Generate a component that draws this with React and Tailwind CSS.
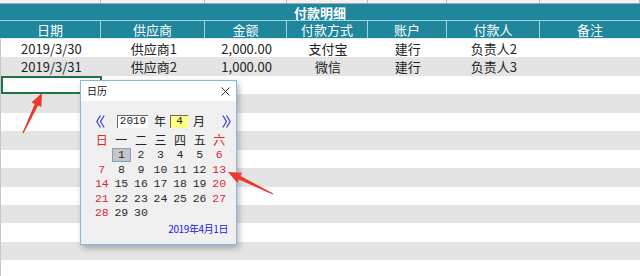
import React from "react";

const colW = ["w-[101px]", "w-[104px]", "w-[82px]", "w-[81px]", "w-[79px]", "w-[93px]", "w-[100px]"];
const headers = ["日期", "供应商", "金额", "付款方式", "账户", "付款人", "备注"];
const data = [
  ["2019/3/30", "供应商1", "2,000.00", "支付宝", "建行", "负责人2", ""],
  ["2019/3/31", "供应商2", "1,000.00", "微信", "建行", "负责人3", ""],
];

function Arrow({ x1, y1, x2, y2 }) {
  const dx = x2 - x1, dy = y2 - y1;
  const L = Math.hypot(dx, dy);
  const ux = dx / L, uy = dy / L;
  const nx = -uy, ny = ux;
  const hl = 13, hw = 5.5, sw0 = 0.6, sw1 = 1.9;
  const bx = x2 - ux * hl, by = y2 - uy * hl;
  const p = [
    [x1 + nx * sw0, y1 + ny * sw0],
    [bx + nx * sw1, by + ny * sw1],
    [bx + nx * hw, by + ny * hw],
    [x2, y2],
    [bx - nx * hw, by - ny * hw],
    [bx - nx * sw1, by - ny * sw1],
    [x1 - nx * sw0, y1 - ny * sw0],
  ];
  return <polygon points={p.map((q) => q.join(",")).join(" ")} fill="#ea3a2e" />;
}

const weekdays = ["日", "一", "二", "三", "四", "五", "六"];

function Chevrons({ dir }) {
  return (
    <svg width="9" height="13" viewBox="0 0 9 13" className="block">
      {dir === "l" ? (
        <g fill="none" stroke="#3c3cd0" strokeWidth="1.2">
          <polyline points="4.5,0.5 0.8,6.5 4.5,12.5" />
          <polyline points="8.2,0.5 4.5,6.5 8.2,12.5" />
        </g>
      ) : (
        <g fill="none" stroke="#3c3cd0" strokeWidth="1.2">
          <polyline points="0.8,0.5 4.5,6.5 0.8,12.5" />
          <polyline points="4.5,0.5 8.2,6.5 4.5,12.5" />
        </g>
      )}
    </svg>
  );
}

const cjk = { fontFamily: '"Noto Sans CJK SC", sans-serif' };
const mono = { fontFamily: '"Liberation Mono", monospace' };

function Calendar() {
  const cells = [null];
  for (let d = 1; d <= 30; d++) cells.push(d);
  return (
    <div className="absolute left-[80px] top-[80px] w-[157px] h-[165px] border border-[#86b6e4] bg-[#f0f0f0] shadow-[2px_3px_6px_rgba(0,0,0,0.28)]">
      <div className="h-[20px] bg-white flex items-center justify-between pl-[6px] pr-[6px]">
        <span className="text-[10px] leading-none text-[#111]" style={cjk}>日历</span>
        <svg width="9" height="9" viewBox="0 0 9 9" className="block">
          <path d="M0.5 0.5 L8.5 8.5 M8.5 0.5 L0.5 8.5" stroke="#333" strokeWidth="1" />
        </svg>
      </div>
      <div className="pt-[14px]">
        <div className="flex items-center h-[12px] pl-[15px]">
          <Chevrons dir="l" />
          <div className="ml-[12px] w-[31px] h-[13px] border-t border-l border-[#666] border-b-[#e0e0e0] border-r-[#e0e0e0] bg-white flex items-center justify-center text-[11px] leading-none text-[#222]" style={mono}>2019</div>
          <span className="ml-[6px] text-[12px] leading-none text-[#222]" style={cjk}>年</span>
          <div className="ml-[4px] w-[18px] h-[13px] border-t border-l border-[#666] border-b-[#e0e0e0] border-r-[#e0e0e0] bg-[#ffff80] flex items-center justify-center text-[11px] leading-none text-[#222]" style={mono}>4</div>
          <span className="ml-[5px] text-[12px] leading-none text-[#222]" style={cjk}>月</span>
          <div className="ml-[17px]"><Chevrons dir="r" /></div>
        </div>
        <div className="ml-[11px] mt-[6px] w-[137px] grid grid-cols-7">
          {weekdays.map((w, i) => (
            <div key={w} className={"h-[14.5px] flex items-center justify-center text-[12px] leading-none " + (i === 0 || i === 6 ? "text-[#e02828]" : "text-[#222]")} style={cjk}>{w}</div>
          ))}
          {cells.map((d, i) => {
            const col = i % 7;
            const red = col === 0 || col === 6;
            const sel = d === 1;
            return (
              <div key={i} className={"h-[14.5px] flex items-center justify-center text-[11.5px] leading-none " + (red ? "text-[#d8283c] " : "text-[#2a2a2a] ") + (sel ? "bg-[#c6c6c6] border border-[#7ea2c6]" : "")} style={mono}>
                {d ?? ""}
              </div>
            );
          })}
        </div>
        <div className="mt-[4px] pr-[8px] flex justify-end">
          <span className="text-[10px] leading-none text-[#2222d8] tracking-[-0.4px]" style={cjk}>2019年4月1日</span>
        </div>
      </div>
    </div>
  );
}

export default function App() {
  const rows = [];
  for (let r = 0; r < 13; r++) rows.push(data[r] || ["", "", "", "", "", "", ""]);
  return (
    <div className="relative w-[640px] h-[276px] overflow-hidden bg-white text-[#222]" style={{ fontFamily: '"Noto Sans CJK SC", "Noto Sans", sans-serif' }}>
      <div className="h-[4px] bg-[#f2f2f2] border-b border-[#a8a8a8] flex">
        {colW.map((w, i) => (
          <div key={i} className={w + " border-r border-[#b4b4b4]"} />
        ))}
      </div>
      <div className="h-[16px] bg-[#1f869c] flex items-center justify-center text-white font-bold text-[13px] leading-none">付款明细</div>
      <div className="h-px bg-[#9fd3df]" />
      <div className="h-[17px] bg-[#1f869c] flex">
        {headers.map((h, i) => (
          <div key={i} className={colW[i] + " flex items-center justify-center text-white text-[13px] leading-none " + (i < 6 ? "border-r border-[#9fd3df]" : "")}>{h}</div>
        ))}
      </div>
      <div className="h-px bg-[#d8eef3]" />
      {rows.map((row, r) => (
        <div key={r} className={"h-[18.45px] flex border-l border-[#c8c8c8] " + (r % 2 === 1 ? "bg-[#e4e4e4]" : "bg-white")}>
          {row.map((c, i) => (
            <div key={i} className={colW[i] + " flex items-center justify-center text-[13px] leading-none " + (r === 2 && i === 0 ? "border-2 border-[#217346]" : "")}>{c}</div>
          ))}
        </div>
      ))}
      <Calendar />
      <svg className="absolute left-0 top-0 pointer-events-none" width="640" height="276">
        <Arrow x1={23} y1={133} x2={42} y2={93} />
        <Arrow x1={273} y1={194} x2={228} y2={172} />
      </svg>
    </div>
  );
}
